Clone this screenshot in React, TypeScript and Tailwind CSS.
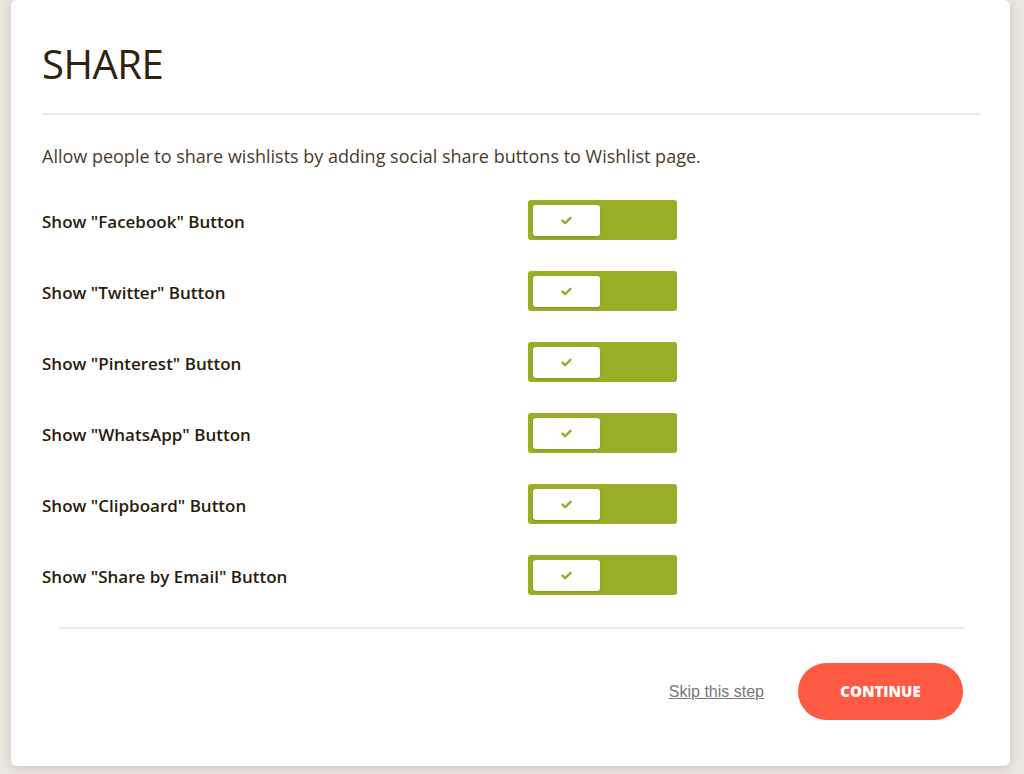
import React from 'react'

const items = ['Facebook', 'Twitter', 'Pinterest', 'WhatsApp', 'Clipboard', 'Share by Email']

const Toggle = () => {
  return (
    <div className="flex h-[40px] w-[149px] items-center rounded-[3px] bg-[#98ae26] pl-[5px]">
      <div className="flex h-[31px] w-[67px] items-center justify-center rounded-[3px] bg-white shadow-[0_1px_2px_rgba(0,0,0,0.15)]">
        <svg width="11" height="9" viewBox="0 0 11 9">
          <path d="M1.5 4.6 L4.2 7.2 L9.5 1.8" fill="none" stroke="#98ae26" strokeWidth="2.4" strokeLinecap="round" strokeLinejoin="round" />
        </svg>
      </div>
    </div>
  )
}

const App = () => {
  return (
    <div className="h-[774px] w-full overflow-hidden bg-[#ebe6df] font-['Open_Sans',sans-serif]">
      <div className="ml-[11px] h-[766px] w-[999px] rounded-[6px] bg-white px-[31px] pt-[40px] shadow-[0_2px_10px_rgba(120,100,70,0.25)]">
        <h1 className="text-[40px] font-normal leading-[48px] tracking-[-0.5px] text-[#2f2210]">SHARE</h1>
        <div className="mt-[25px] h-[2px] w-[938px] bg-[#ebebeb]" />

        <p className="mt-[29px] text-[18px] leading-[24px] text-[#4a3c2c]">
          Allow people to share wishlists by adding social share buttons to Wishlist page.
        </p>

        <div className="mt-[32px] flex flex-col gap-[31px]">
          {items.map((name) => (
            <div key={name} className="flex h-[40px] items-center">
              <span className="w-[486px] pt-[4px] text-[17px] font-semibold text-[#2a1c0c]">
                Show "{name}" Button
              </span>
              <Toggle />
            </div>
          ))}
        </div>

        <div className="ml-[17px] mt-[32px] h-[2px] w-[905px] bg-[#ececec]" />

        <div className="mr-[16px] mt-[34px] flex items-center justify-end gap-[34px]">
          <a href="#" className="font-['Liberation_Sans',Arial,sans-serif] text-[16px] text-[#777777] underline">
            Skip this step
          </a>
          <button className="h-[57px] w-[165px] rounded-full bg-[#fe5a43] text-[15px] font-extrabold text-white">
            CONTINUE
          </button>
        </div>
      </div>
    </div>
  )
}

export default App
